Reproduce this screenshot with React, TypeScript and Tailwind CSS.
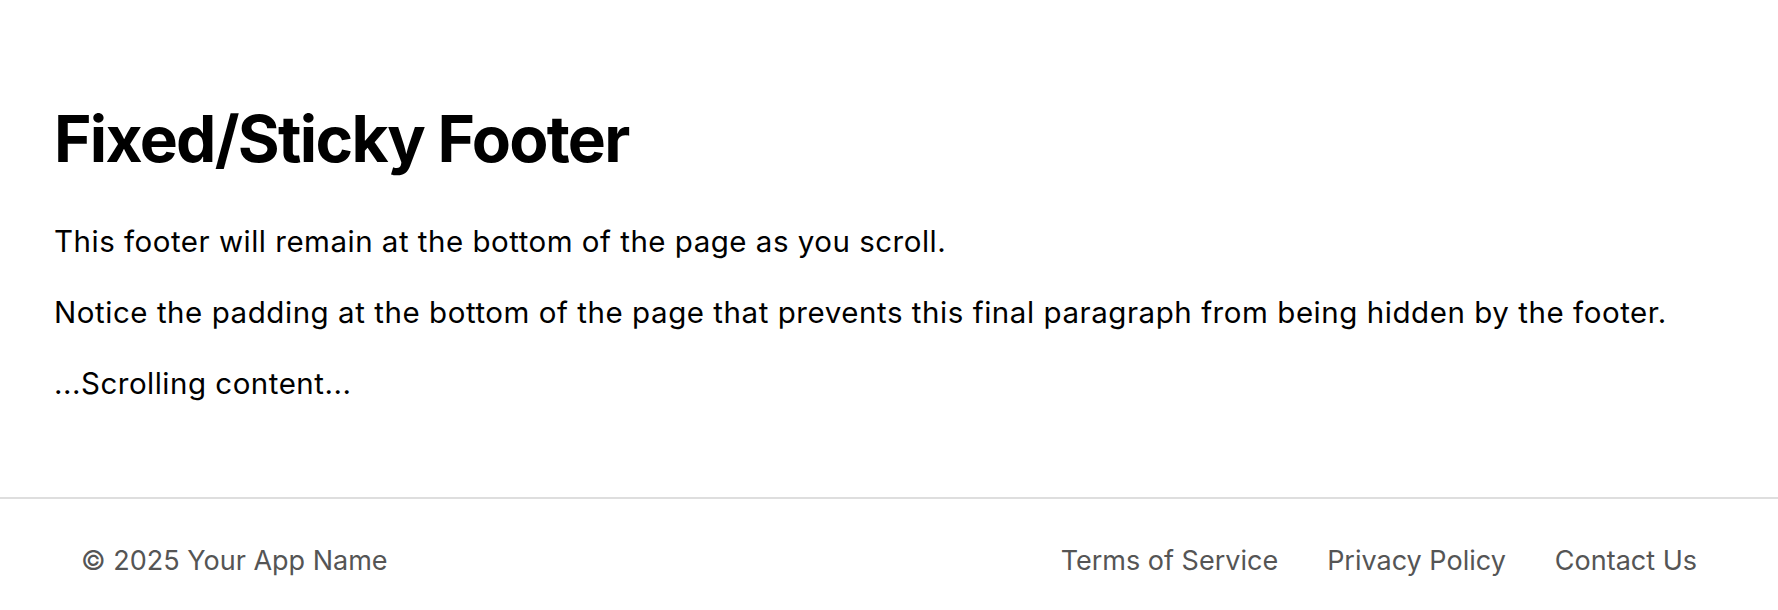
export default function App() {
    const links = ["Terms of Service", "Privacy Policy", "Contact Us"];

    return (
        <div className="min-h-screen flex flex-col bg-white text-black" style={{ fontFamily: "Inter, 'Noto Sans', sans-serif" }}>
            <main className="flex-1 px-[54px] pt-[57px] pb-[40px]">
                <h1 className="text-[64px] font-bold leading-[77px] mt-[43px] mb-[43px] tracking-[-1.7px]">Fixed/Sticky Footer</h1>
                <p className="text-[29.5px] leading-[43px] mb-[28px] tracking-[0.5px]">This footer will remain at the bottom of the page as you scroll.</p>
                <p className="text-[29.5px] leading-[43px] mb-[28px] tracking-[0.55px]">
                    Notice the padding at the bottom of the page that prevents this final paragraph from being hidden by the footer.
                </p>
                <p className="text-[29.5px] leading-[43px] tracking-[0.5px]">...Scrolling content...</p>
            </main>
            <footer className="border-t-2 border-[#dedede] h-[113px] px-[81px] pt-[42px] flex items-start justify-between text-[#555555] text-[27px] leading-[40px]">
                <span>© 2025 Your App Name</span>
                <nav className="flex gap-[49px]">
                    {links.map((l) => (
                        <a key={l} href="#" className="text-[#555555]">{l}</a>
                    ))}
                </nav>
            </footer>
        </div>
    );
}
